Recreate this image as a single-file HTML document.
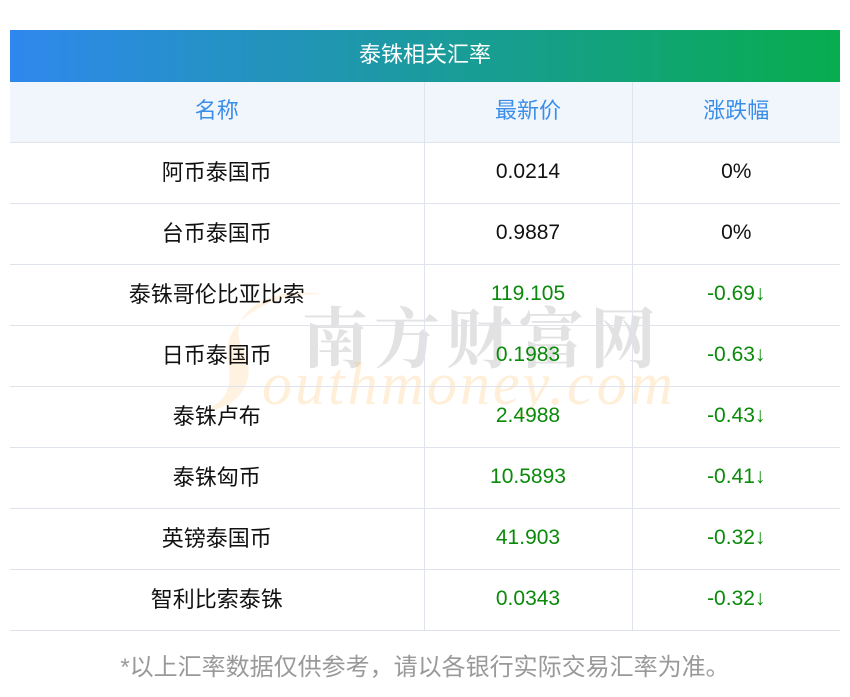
<!DOCTYPE html>
<html><head><meta charset="utf-8"><style>
body{margin:0;width:850px;height:697px;background:#fff;font-family:"Liberation Sans","Noto Sans CJK SC",sans-serif;position:relative;overflow:hidden}
.hdr{position:absolute;left:10px;top:30px;width:830px;height:52px;background:linear-gradient(90deg,#2f88ee,#07ad4e);color:#fff;font-size:22px;text-align:center;line-height:50px}
table{position:absolute;left:10px;top:82px;width:830px;border-collapse:collapse;font-size:21px}
td{height:57px;border-bottom:1px solid #dfe3ec;text-align:center;padding:0 0 3px 0;color:#111}
td+td{border-left:1px solid #dfe3ec}
td span{font-size:22px;position:relative;top:-1px}
tr.h td{background:#f1f6fd;color:#3b8ee8;padding-bottom:6px;height:54px}
tr.h td span{top:0}
.g{color:#0a8a0a}
.foot{position:absolute;top:647px;left:0;width:850px;text-align:center;color:#999;font-size:24px}
.wm{position:absolute;left:302px;top:286px;font-size:66px;color:rgba(150,150,150,.28);letter-spacing:6px;font-weight:bold;font-family:"Noto Serif CJK SC",serif}
.wm2{position:absolute;left:262px;top:350px;font-size:60px;font-style:italic;color:rgba(255,190,100,.25);font-family:"Liberation Serif",serif;letter-spacing:3px}
</style></head><body>
<div class="hdr">泰铢相关汇率</div>
<svg style="position:absolute;left:200px;top:285px" width="130" height="130"><path d="M125 10 C70 -2 25 30 42 62 C58 92 45 122 0 128 C45 110 24 82 28 60 C32 30 80 5 125 10Z" fill="rgba(255,190,100,.2)"/></svg>
<div class="wm">南方财富网</div>
<div class="wm2">outhmoney.com</div>
<table>
<col style="width:414px"><col style="width:208px"><col>
<tr class="h"><td><span>名称</span></td><td><span>最新价</span></td><td><span>涨跌幅</span></td></tr>
<tr><td><span>阿币泰国币</span></td><td>0.0214</td><td>0%</td></tr>
<tr><td><span>台币泰国币</span></td><td>0.9887</td><td>0%</td></tr>
<tr><td><span>泰铢哥伦比亚比索</span></td><td class="g">119.105</td><td class="g">-0.69↓</td></tr>
<tr><td><span>日币泰国币</span></td><td class="g">0.1983</td><td class="g">-0.63↓</td></tr>
<tr><td><span>泰铢卢布</span></td><td class="g">2.4988</td><td class="g">-0.43↓</td></tr>
<tr><td><span>泰铢匈币</span></td><td class="g">10.5893</td><td class="g">-0.41↓</td></tr>
<tr><td><span>英镑泰国币</span></td><td class="g">41.903</td><td class="g">-0.32↓</td></tr>
<tr><td><span>智利比索泰铢</span></td><td class="g">0.0343</td><td class="g">-0.32↓</td></tr>
</table>
<div class="foot">*以上汇率数据仅供参考，请以各银行实际交易汇率为准。</div>
</body></html>
